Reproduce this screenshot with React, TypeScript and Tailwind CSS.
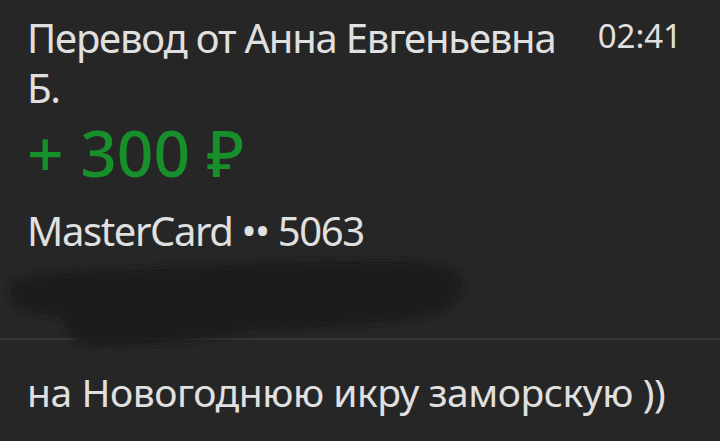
import React from "react";

export default function App() {
  return (
    <div
      className="w-[720px] h-[441px] bg-[#262626] overflow-hidden flex flex-col text-[#e0e0e0]"
      style={{ fontFamily: '"Noto Sans", "Open Sans", sans-serif' }}
    >
      <div className="relative h-[338px] shrink-0">
        <svg className="absolute left-0 top-[240px]" width="500" height="110" viewBox="0 -5 500 110">
          <defs>
            <filter id="b" filterUnits="userSpaceOnUse" x="-20" y="-20" width="540" height="150">
              <feGaussianBlur stdDeviation="3" />
            </filter>
          </defs>
          <path
            d="M 10 45 C 10 32, 40 28, 90 26 C 180 22, 280 15, 380 15 C 430 15, 462 22, 462 40 C 462 60, 440 72, 400 76 C 340 82, 300 86, 260 85 C 230 90, 180 100, 100 102 C 70 102, 65 80, 60 72 C 30 70, 10 65, 10 45 Z"
            fill="#1c1c1c"
            filter="url(#b)"
          />
        </svg>
        <div className="relative px-[27px] pt-[13px]">
          <div className="flex items-start justify-between">
            <div className="text-[40px] leading-[50px] tracking-[-1.2px] w-[545px]">
              Перевод от Анна Евгеньевна Б.
            </div>
            <div className="text-[33px] leading-[46px] pr-[11px]">02:41</div>
          </div>
          <div className="mt-[8px] text-[64px] leading-[64px] font-medium text-[#17902c]">+ 300 ₽</div>
          <div className="mt-[22px] text-[40px] leading-[48px] tracking-[-1.4px]">MasterCard •• 5063</div>
        </div>
      </div>
      <div className="h-[2px] bg-[#353535] shrink-0" />
      <div className="flex-1 px-[27px] pt-[30px]">
        <div className="text-[39px] leading-[44px] tracking-[-0.45px]">на Новогоднюю икру заморскую ))</div>
      </div>
    </div>
  );
}
